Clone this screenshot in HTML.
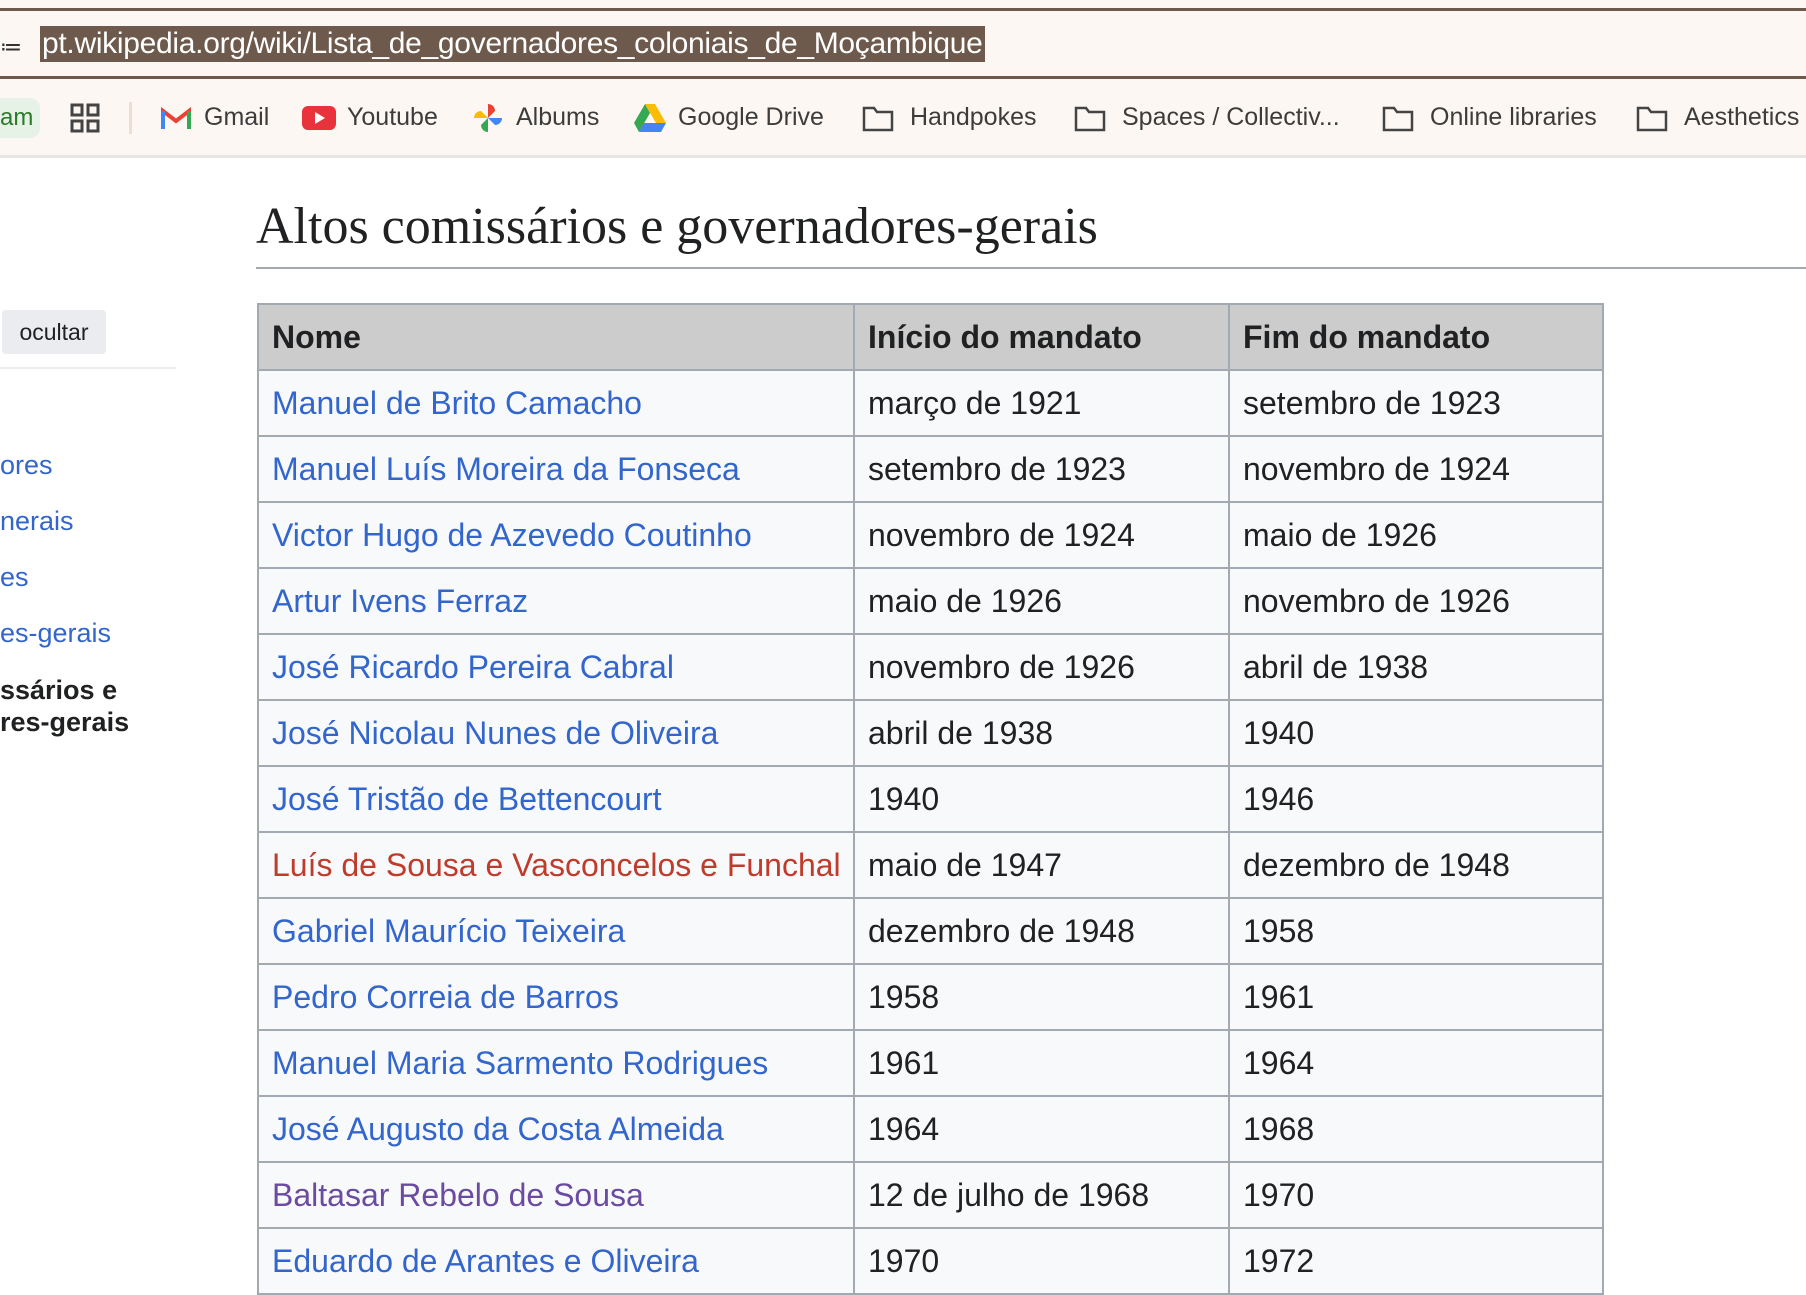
<!DOCTYPE html>
<html><head><meta charset="utf-8"><style>
*{margin:0;padding:0;box-sizing:border-box}
body{width:1806px;height:1266px;overflow:hidden;background:#fff;font-family:"Liberation Sans",Arial,sans-serif;position:relative}
.top{position:absolute;left:0;top:0;width:1806px;height:158px;background:#fdf7f3}
.l1{position:absolute;left:0;top:8px;width:1806px;height:3px;background:#6e5a4d}
.l2{position:absolute;left:0;top:76px;width:1806px;height:3px;background:#6e5a4d}
.url{position:absolute;left:40px;top:26px;height:36px;background:#6e5a4d;color:#fff;font-size:30px;line-height:36px;padding:0 2px;white-space:nowrap;letter-spacing:-0.3px}
.bb{position:absolute;top:0;left:0;width:1806px;height:158px;border-bottom:3px solid #e8e4e1}
.bk{position:absolute;top:102px;font-size:25px;color:#3c3c3c;line-height:30px;white-space:nowrap}
.ic{position:absolute;top:104px}
h2{position:absolute;left:256px;top:197px;font-family:"Liberation Serif",serif;font-weight:normal;font-size:52px;color:#202122;white-space:nowrap}
.hr{position:absolute;left:256px;top:267px;width:1550px;height:2px;background:#a2a9b1}
table{position:absolute;left:257px;top:303px;border-collapse:collapse;font-size:32px;color:#202122;table-layout:fixed;width:1345px}
td,th{border:2px solid #a2a9b1;height:66px;padding:0 13px;text-align:left;background:#f8f9fa;white-space:nowrap;overflow:visible}
th{background:#cccccc;font-weight:bold}
a{color:#3366cc;text-decoration:none}
.red{color:#bf3c2c}.vis{color:#6b4ba1}
.side{position:absolute;left:0;font-size:27px;color:#3366cc;white-space:nowrap}
</style></head><body>
<div class="top"><div class="bb"></div></div>
<div class="l1"></div><div class="l2"></div>
<div style="position:absolute;left:0;top:34px;font-size:22px;color:#333">&#8788;</div>
<div class="url">pt.wikipedia.org/wiki/Lista_de_governadores_coloniais_de_Moçambique</div>

<div style="position:absolute;left:-10px;top:98px;width:50px;height:40px;background:#e6f2e6;border-radius:10px;color:#2a7a2a;font-size:24px;line-height:40px;padding-left:10px">am</div>
<svg class="ic" style="left:70px;top:103px" width="30" height="30" viewBox="0 0 30 30" fill="none" stroke="#444" stroke-width="3"><rect x="2" y="2" width="10" height="10"/><rect x="18" y="2" width="10" height="10"/><rect x="2" y="18" width="10" height="10"/><rect x="18" y="18" width="10" height="10"/></svg>
<div style="position:absolute;left:129px;top:102px;width:3px;height:32px;background:#f0ddd0"></div>
<svg class="ic" style="left:161px;top:107px" width="30" height="22" viewBox="0 0 30 22"><path d="M2 22V4l13 10L28 4v18" fill="none" stroke="#ea4335" stroke-width="4"/><path d="M2 22V4" stroke="#4285f4" stroke-width="4"/><path d="M28 22V4" stroke="#34a853" stroke-width="4"/></svg>
<div class="bk" style="left:204px">Gmail</div>
<svg class="ic" style="left:302px;top:106px" width="34" height="24"><rect width="34" height="24" rx="6" fill="#e8323c"/><path d="M13 6l10 6-10 6z" fill="#fff"/></svg>
<div class="bk" style="left:347px">Youtube</div>
<svg class="ic" style="left:473px;top:102px" width="30" height="32" viewBox="0 0 30 32"><path d="M15 16V2a7 7 0 017 7z" fill="#ea4335"/><path d="M15 16h14a7 7 0 01-7 7z" fill="#4285f4"/><path d="M15 16v14a7 7 0 01-7-7z" fill="#34a853"/><path d="M15 16H1a7 7 0 017-7z" fill="#fbbc05"/></svg>
<div class="bk" style="left:516px">Albums</div>
<svg class="ic" style="left:634px;top:104px" width="32" height="28" viewBox="0 0 32 28"><path d="M11 0h10l11 19H22z" fill="#fbbc05"/><path d="M11 0l5 9-11 19L0 19z" fill="#34a853"/><path d="M5 28l5-9h22l-5 9z" fill="#4285f4"/></svg>
<div class="bk" style="left:678px">Google Drive</div>
<svg class="ic" style="left:862px;top:106px" width="32" height="26"><path d="M2 2h10l3 4h15v18H2z" fill="none" stroke="#444" stroke-width="2.5"/></svg>
<div class="bk" style="left:910px">Handpokes</div>
<svg class="ic" style="left:1074px;top:106px" width="32" height="26"><path d="M2 2h10l3 4h15v18H2z" fill="none" stroke="#444" stroke-width="2.5"/></svg>
<div class="bk" style="left:1122px">Spaces / Collectiv...</div>
<svg class="ic" style="left:1382px;top:106px" width="32" height="26"><path d="M2 2h10l3 4h15v18H2z" fill="none" stroke="#444" stroke-width="2.5"/></svg>
<div class="bk" style="left:1430px">Online libraries</div>
<svg class="ic" style="left:1636px;top:106px" width="32" height="26"><path d="M2 2h10l3 4h15v18H2z" fill="none" stroke="#444" stroke-width="2.5"/></svg>
<div class="bk" style="left:1684px">Aesthetics</div>

<h2>Altos comissários e governadores-gerais</h2>
<div class="hr"></div>

<div style="position:absolute;left:2px;top:310px;width:104px;height:44px;background:#eaecf0;border-radius:4px;font-size:23px;line-height:44px;text-align:center;color:#202122">ocultar</div>
<div style="position:absolute;left:0;top:367px;width:176px;height:2px;background:#eaecf0"></div>
<div class="side" style="top:450px">ores</div>
<div class="side" style="top:506px">nerais</div>
<div class="side" style="top:562px">es</div>
<div class="side" style="top:618px">es-gerais</div>
<div class="side" style="top:674px;color:#202122;font-weight:bold;line-height:32px">ssários e<br>res-gerais</div>

<table>
<colgroup><col style="width:596px"><col style="width:375px"><col style="width:374px"></colgroup>
<tr><th>Nome</th><th>Início do mandato</th><th>Fim do mandato</th></tr>
<tr><td><a>Manuel de Brito Camacho</a></td><td>março de 1921</td><td>setembro de 1923</td></tr>
<tr><td><a>Manuel Luís Moreira da Fonseca</a></td><td>setembro de 1923</td><td>novembro de 1924</td></tr>
<tr><td><a>Victor Hugo de Azevedo Coutinho</a></td><td>novembro de 1924</td><td>maio de 1926</td></tr>
<tr><td><a>Artur Ivens Ferraz</a></td><td>maio de 1926</td><td>novembro de 1926</td></tr>
<tr><td><a>José Ricardo Pereira Cabral</a></td><td>novembro de 1926</td><td>abril de 1938</td></tr>
<tr><td><a>José Nicolau Nunes de Oliveira</a></td><td>abril de 1938</td><td>1940</td></tr>
<tr><td><a>José Tristão de Bettencourt</a></td><td>1940</td><td>1946</td></tr>
<tr><td><a class="red">Luís de Sousa e Vasconcelos e Funchal</a></td><td>maio de 1947</td><td>dezembro de 1948</td></tr>
<tr><td><a>Gabriel Maurício Teixeira</a></td><td>dezembro de 1948</td><td>1958</td></tr>
<tr><td><a>Pedro Correia de Barros</a></td><td>1958</td><td>1961</td></tr>
<tr><td><a>Manuel Maria Sarmento Rodrigues</a></td><td>1961</td><td>1964</td></tr>
<tr><td><a>José Augusto da Costa Almeida</a></td><td>1964</td><td>1968</td></tr>
<tr><td><a class="vis">Baltasar Rebelo de Sousa</a></td><td>12 de julho de 1968</td><td>1970</td></tr>
<tr><td><a>Eduardo de Arantes e Oliveira</a></td><td>1970</td><td>1972</td></tr>
</table>
</body></html>
